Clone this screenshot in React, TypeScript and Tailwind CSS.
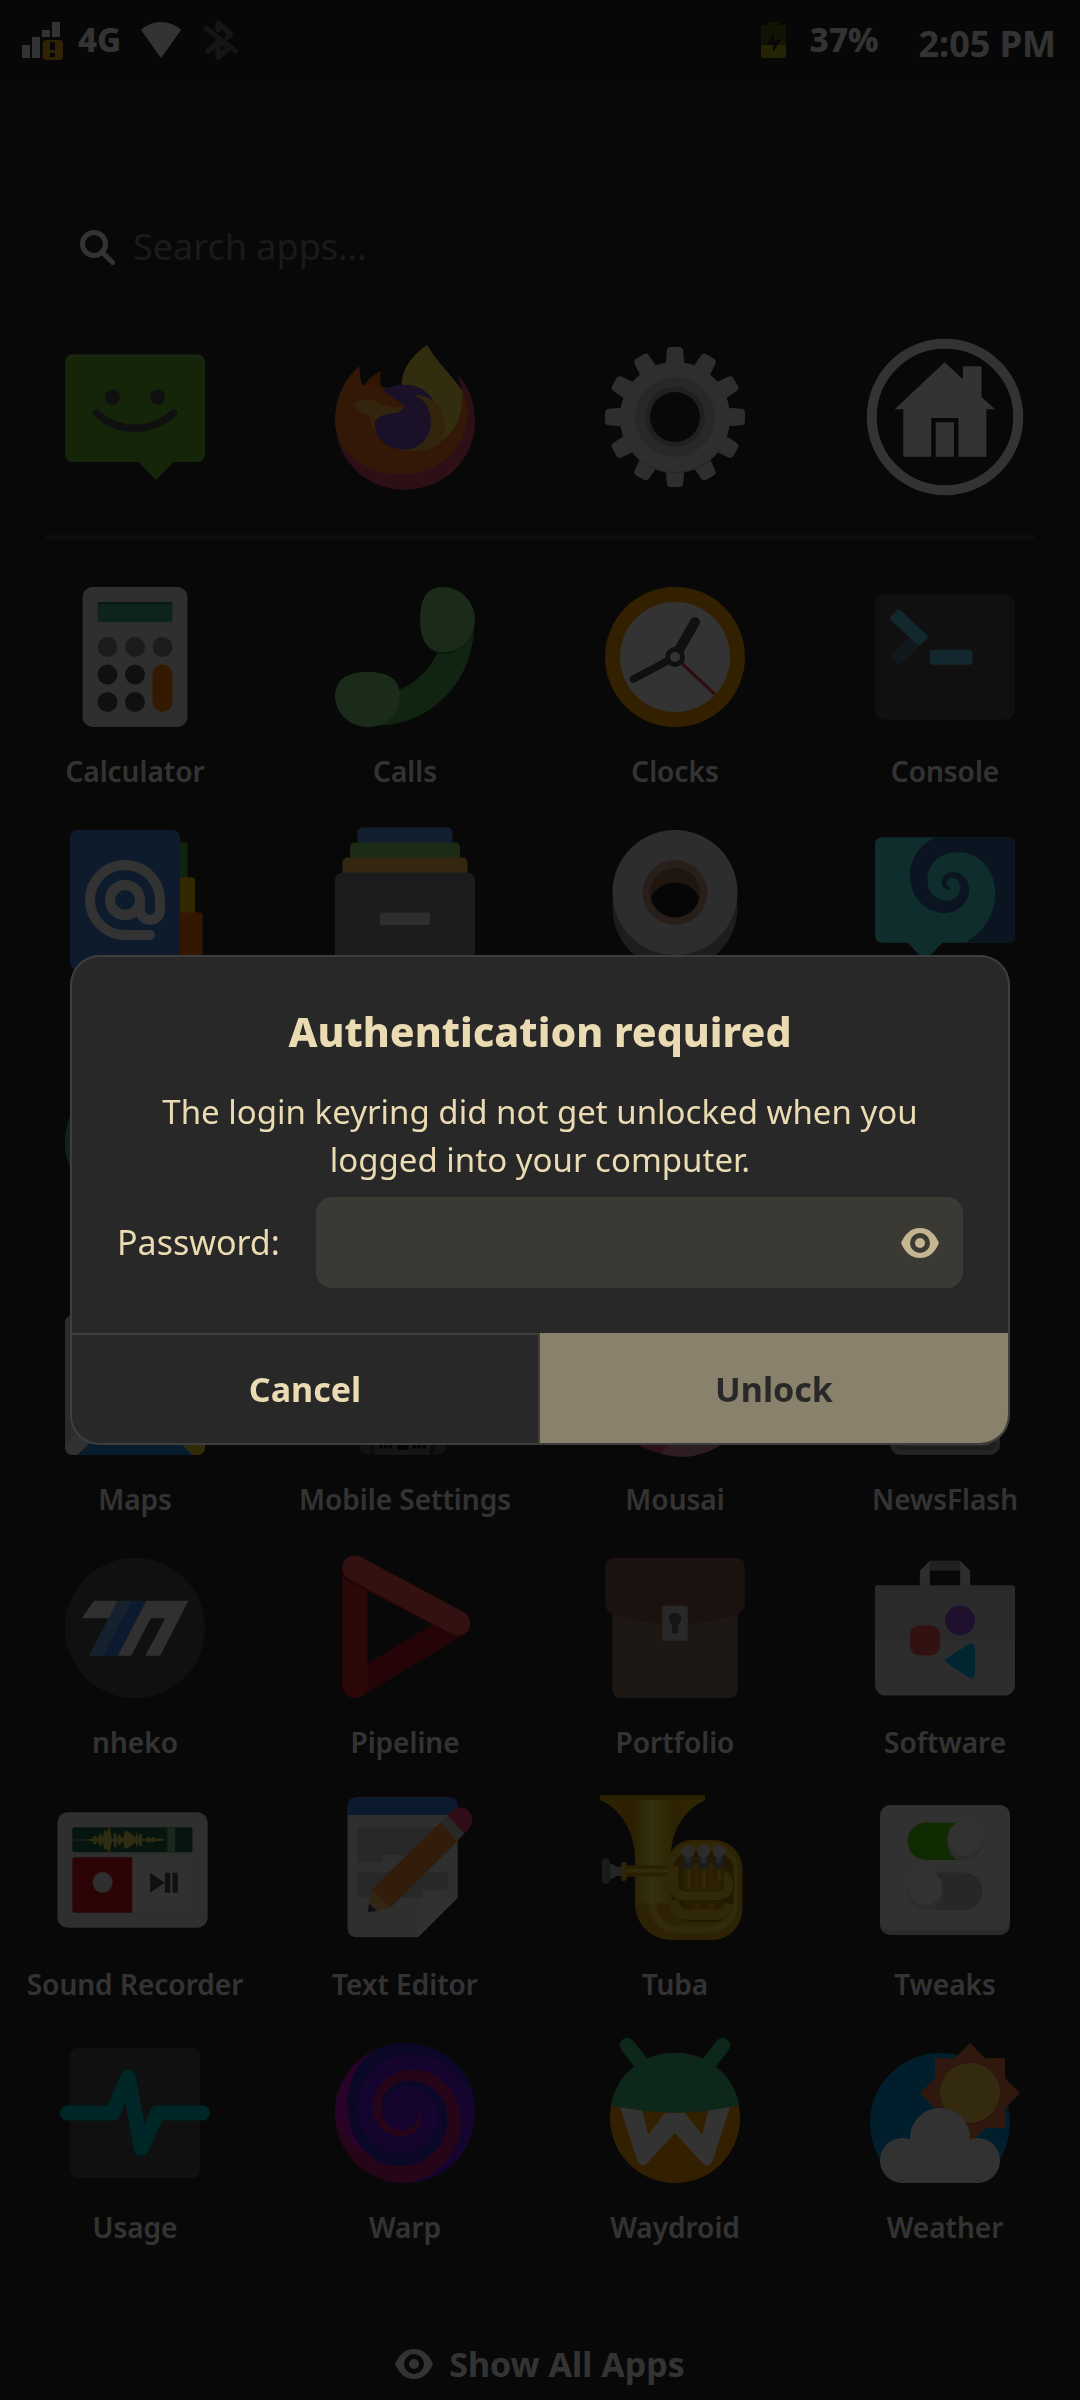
import type { ReactNode } from "react";

type Kids = { children?: ReactNode };

/** 64-unit icon canvas, 160px on screen. */
function Icon({ children }: Kids) {
  return (
    <svg viewBox="0 0 64 64" className="size-40 overflow-visible" aria-hidden="true">
      {children}
    </svg>
  );
}

/** Fine drawing grid centred on (x, y), mapped on the 64-unit canvas. */
function Fine({ x, y, children }: Kids & { x: number; y: number }) {
  return (
    <g transform={`translate(32 32) scale(0.13774 0.13333) translate(${-x} ${-y})`}>{children}</g>
  );
}

const Chats = () => (
  <Icon>
    <path d="M7 7H57a3 3 0 0 1 3 3V47a3 3 0 0 1-3 3H47.3L40.4 57.2 33.5 50H7a3 3 0 0 1-3-3V10a3 3 0 0 1 3-3Z" fill="#66bb2d" />
    <path d="M4 11V10a3 3 0 0 1 3-3H57a3 3 0 0 1 3 3v1a3 3 0 0 0-3-3H7a3 3 0 0 0-3 3Z" fill="#fff" opacity=".2" />
    <circle cx="23" cy="24" r="3" fill="#4f4f4f" />
    <circle cx="41" cy="24" r="3" fill="#4f4f4f" />
    <path d="M16.6 30.4C25 38.5 39 38.5 47.4 30.4" fill="none" stroke="#4f4f4f" strokeWidth="3" strokeLinecap="round" />
  </Icon>
);

const Firefox = () => (
  <Icon>
    <Fine x={1176} y={322}>
      <path d="M1325 190C1360 225 1379 280 1379 335C1379 450 1290 540 1176 540C1062 540 973 450 973 330L1340 240C1338 222 1332 205 1325 190Z" fill="#e0506a" />
      <path d="M1044 170C1000 205 973 270 973 330C976 425 1060 494 1166 494C1275 494 1358 410 1358 310C1358 285 1352 262 1342 245L1290 250L1176 240L1053 226C1046 215 1044 190 1044 170Z" fill="#ff7a2a" />
      <path d="M1106 185C1085 195 1068 210 1058 226L1110 245C1104 225 1102 205 1106 185Z" fill="#f96f0a" />
      <path d="M1240 105C1200 135 1165 175 1167 230L1230 300L1272 400C1320 375 1344 320 1343 245C1320 205 1270 160 1240 105Z" fill="#ffe04d" />
      <path d="M1203 257C1260 255 1292 300 1292 345C1292 370 1288 385 1280 398C1255 425 1200 430 1160 420L1200 330Z" fill="#ffb340" />
      <path d="M1028 282C1045 265 1075 265 1100 278C1125 292 1155 300 1176 288L1180 400L1205 414C1160 428 1080 400 1073 315C1050 312 1035 300 1028 282Z" fill="#ffb340" />
      <path d="M1110 245C1130 230 1150 225 1176 225C1215 225 1245 245 1262 278C1245 262 1225 256 1203 257C1235 270 1251 300 1251 335C1251 385 1220 420 1176 420C1125 420 1088 385 1088 345C1088 320 1120 310 1156 310L1176 288Z" fill="#8250c8" />
      <path d="M1053 226C1100 222 1140 270 1176 286C1155 300 1125 292 1100 278C1075 265 1045 265 1028 282L1020 240Z" fill="#ff7a2a" />
    </Fine>
  </Icon>
);

const Gear = () => (
  <Icon>
    {[0, 30, 60, 90, 120, 150, 180, 210, 240, 270, 300, 330].map((a) => (
      <path key={a} transform={`rotate(${a} 32 32)`} d="M28.2 12L28.7 5.6Q28.8 4 30.3 4H33.7Q35.2 4 35.3 5.6L35.8 12Z" fill="#e4e4e4" />
    ))}
    <circle cx="32" cy="32.5" r="22" fill="#b8b8b8" />
    <circle cx="32" cy="32" r="22" fill="#e4e4e4" />
    <circle cx="32" cy="32" r="16" fill="#c8c8c8" />
    <circle cx="32" cy="32" r="12" fill="#a2a2a2" />
    <circle cx="32" cy="32" r="10" fill="#282828" />
  </Icon>
);

const Home = () => (
  <Icon>
    <circle cx="32" cy="32" r="29.3" fill="none" stroke="#fff" strokeWidth="4" />
    <Fine x={1176} y={322}>
      <path d="M1175 158L1228 209V170H1282V262L1321 299H1296V441H1215V325H1136V441H1055V299H1030ZM1149 338H1202V441H1149Z" fill="#fff" />
    </Fine>
  </Icon>
);

const Calculator = () => (
  <Icon>
    <rect x="11" y="4" width="42" height="56" rx="4" fill="#e8e8e8" />
    <rect x="17" y="10" width="30" height="8" rx="1" fill="#46af87" />
    <path d="M17 11a1 1 0 0 1 1-1H46a1 1 0 0 1 1 1Z" fill="#2b7a5d" />
    {[21, 32, 43].map((x) => <circle key={x} cx={x} cy="28" r="4" fill="#8c8c8c" />)}
    {[21, 32].map((x) => <circle key={x} cx={x} cy="39" r="4" fill="#4f4f4f" />)}
    {[21, 32].map((x) => <circle key={x} cx={x} cy="50" r="4" fill="#4f4f4f" />)}
    <rect x="39" y="35" width="8" height="19" rx="4" fill="#ff7f00" />
  </Icon>
);

const Calls = () => (
  <Icon>
    <Fine x={1176} y={1042}>
      <path d="M1377 950C1372 1120 1250 1245 1100 1248L1160 1140C1210 1120 1250 1075 1275 1020Z" fill="#50b455" />
      <path d="M1285 837C1340 837 1379 885 1377 950C1370 995 1340 1033 1290 1033C1250 1033 1228 1000 1222 950Z" fill="#3b8a40" />
      <path d="M1285 832C1340 832 1379 880 1379 928C1379 985 1340 1027 1290 1027C1235 1027 1220 985 1220 928C1220 875 1235 832 1285 832Z" fill="#86d684" />
      <path d="M1067 1087C1125 1087 1161 1105 1161 1158C1161 1212 1120 1252 1067 1252C1015 1252 973 1210 973 1160C973 1108 1010 1087 1067 1087Z" fill="#86d684" />
    </Fine>
  </Icon>
);

const Clocks = () => (
  <Icon>
    <circle cx="32" cy="32" r="28" fill="#ffa000" />
    <circle cx="32" cy="32" r="22" fill="#fff" />
    <g fill="none" strokeLinecap="round">
      <path d="M32 32L48 47" stroke="#e8404a" strokeWidth="1.3" strokeLinecap="butt" />
      <path d="M32 32L15.4 40.8" stroke="#4f4f4f" strokeWidth="3" />
      <path d="M32 32L40 18" stroke="#4f4f4f" strokeWidth="4" />
    </g>
    <circle cx="32" cy="32" r="4" fill="#4f4f4f" />
    <circle cx="32" cy="32" r="2" fill="#fff" />
  </Icon>
);

const Console = () => (
  <Icon>
    <rect x="4" y="7" width="56" height="50" rx="4" fill="#505050" />
    <Fine x={1176} y={1042}>
      <g strokeWidth="12" strokeLinejoin="round">
        <path d="M1070 993L1022 1040L1042 1060L1092 1010Z" fill="#557d8c" stroke="#557d8c" />
        <path d="M1022 925L1042 905L1120 982L1100 1002Z" fill="#5fc3eb" stroke="#5fc3eb" />
      </g>
      <rect x="1132" y="1020" width="124" height="45" rx="9" fill="#5fc3eb" />
    </Fine>
  </Icon>
);

const Contacts = () => (
  <Icon>
    <rect x="40" y="9" width="13" height="20" rx="1" fill="#50b44f" />
    <rect x="40" y="23" width="16" height="20" rx="1" fill="#ffcc00" />
    <rect x="40" y="37" width="19" height="17" rx="1" fill="#ff7300" />
    <rect x="6" y="4" width="44" height="56" rx="3" fill="#4689dc" />
    <g fill="none" stroke="#fff" strokeWidth="4" strokeLinecap="round">
      <circle cx="28" cy="32" r="6" />
      <path d="M34 32V36A4 4 0 0 0 42 36V32A14 14 0 1 0 28 46H38" />
    </g>
  </Icon>
);

const Files = () => (
  <Icon>
    <rect x="13" y="3" width="38" height="20" rx="2" fill="#5a9be6" />
    <rect x="10" y="9" width="44" height="20" rx="2" fill="#86d668" />
    <rect x="7" y="15" width="50" height="20" rx="2" fill="#ffc355" />
    <rect x="4" y="21" width="56" height="39" rx="3" fill="#8e8e8e" />
    <rect x="22" y="37" width="20" height="5" rx="1" fill="#e4e4e4" />
  </Icon>
);

const DiskUsage = () => (
  <Icon>
    <clipPath id="roll-hole"><circle cx="32" cy="29" r="10" /></clipPath>
    <circle cx="32" cy="35" r="25" fill="#919191" />
    <circle cx="32" cy="29" r="25" fill="#e0e0e0" />
    <circle cx="32" cy="29" r="13" fill="#cd9b82" />
    <circle cx="32" cy="29" r="10" fill="#9b6e4b" />
    <circle cx="32" cy="36" r="11" fill="#1e1e1e" clipPath="url(#roll-hole)" />
  </Icon>
);

const Fractal = () => (
  <Icon>
    <Fine x={1176} y={300}>
      <path d="M993 112H1360Q1379 112 1379 132V408Q1379 428 1360 428H1168L1118 484L1068 428H993Q973 428 973 408V132Q973 112 993 112Z" fill="#4ae0dc" />
      <path d="M1148 112H1360Q1379 112 1379 132V408Q1379 428 1360 428H1235C1290 395 1322 340 1322 280C1322 210 1275 157 1212 157C1160 157 1125 195 1125 238C1125 275 1150 302 1180 302C1205 302 1220 285 1220 264C1220 245 1208 233 1195 233C1187 233 1181 240 1181 248C1181 256 1186 261 1193 261L1190 270C1178 271 1166 262 1166 247C1166 230 1180 216 1200 216C1225 216 1246 237 1246 268C1246 305 1218 339 1175 339C1118 339 1074 290 1074 225C1074 180 1100 135 1148 112Z" fill="#3769a5" />
    </Fine>
  </Icon>
);

const Disc = () => (
  <Icon>
    <circle cx="32" cy="32" r="28" fill="#40b589" />
  </Icon>
);

const Maps = () => (
  <Icon>
    <clipPath id="map-sheet"><rect x="4" y="4" width="56" height="56" rx="3" /></clipPath>
    <g clipPath="url(#map-sheet)">
      <rect x="4" y="4" width="56" height="56" fill="#d8d4cc" />
      <path d="M4 56L20 40V60H4Z" fill="#f2f2f2" />
      <path d="M9 60L24 45L40 45L55 60Z" fill="#1f8ce0" />
      <path d="M40 45H60V60H55Z" fill="#f5dc28" />
    </g>
  </Icon>
);

const Phone = () => (
  <Icon>
    <rect x="13.4" y="4" width="35.2" height="56" rx="4" fill="#53565a" />
    <path d="M18 30H20V60H18ZM42 30H44V60H42Z" fill="#34384a" />
    <path d="M20 30H42V60H20Z" fill="#6a6b6e" />
    <path d="M28.7 55H33.4V57Q33.4 58 32.4 58H29.7Q28.7 58 28.7 57Z" fill="#101010" />
    {[22.4, 24.3, 26.2, 35.8, 37.7, 39.7].map((x) => <circle key={x} cx={x} cy="56.7" r=".8" fill="#101010" />)}
  </Icon>
);

const Mousai = () => (
  <Icon>
    <circle cx="32" cy="32" r="28" fill="#e6487a" />
    <path d="M26 59.4L33 52H55A28 28 0 0 1 26 59.4Z" fill="#e08aa2" />
  </Icon>
);

const NewsFlash = () => (
  <Icon>
    <rect x="10.2" y="4" width="43.8" height="56" rx="4" fill="#b4b6ae" />
    <rect x="12" y="6" width="40.5" height="52" rx="3" fill="#8e8f8a" />
    <rect x="13.4" y="6" width="37.8" height="50.4" rx="3" fill="#c8c8c6" />
  </Icon>
);

const Nheko = () => (
  <Icon>
    <circle cx="32" cy="32" r="28" fill="#525354" />
    <Fine x={392} y={1012}>
      <path d="M273 930H342L316 983H238Z" fill="#eee" />
      <path d="M342 930H383L300 1095H258Z" fill="#69aae6" />
      <path d="M383 930H425L342 1095H300Z" fill="#4188f0" />
      <path d="M425 930H547L465 1095H422L480 983H438L381 1095H342Z" fill="#eee" />
    </Fine>
  </Icon>
);

const Pipeline = () => (
  <Icon>
    <g fill="none" strokeWidth="10" strokeLinecap="round">
      <path d="M12 55L53 30.5" stroke="#b41820" />
      <path d="M12 8V55" stroke="#d8242c" />
      <path d="M12 9L53 30.5" stroke="#a01820" />
      <path d="M12 8L53 30" stroke="#f7564f" />
    </g>
  </Icon>
);

const Portfolio = () => (
  <Icon>
    <rect x="7" y="20" width="50" height="40" rx="3" fill="#947763" />
    <Fine x={392} y={1012}>
      <path d="M189 831Q189 801 218 801H566Q595 801 595 831V935C595 955 585 967 570 972C460 1010 325 1010 214 972C198 967 189 955 189 935Z" fill="#85564a" />
      <rect x="355" y="945" width="74" height="105" rx="6" fill="#c5c8cc" />
      <ellipse cx="392" cy="985" rx="18" ry="19" fill="#6a6a6a" />
      <rect x="383" y="990" width="18" height="38" fill="#6a6a6a" />
    </Fine>
  </Icon>
);

const Software = () => (
  <Icon>
    <path d="M4 16a1 1 0 0 1 1-1H59a1 1 0 0 1 1 1V55a4 4 0 0 1-4 4H8a4 4 0 0 1-4-4Z" fill="#e2e2e2" />
    <path d="M4 16a1 1 0 0 1 1-1H59a1 1 0 0 1 1 1V37H4Z" fill="#d0d0d0" />
    <Fine x={1176} y={1012}>
      <path d="M1132 810H1220V840H1132Z" fill="#a0a0a0" />
      <path d="M1103 885V840L1132 810V885ZM1249 885V840L1220 810V885Z" fill="#e2e2e2" />
      <path d="M1182 1110L1250 1065Q1256 1062 1256 1070V1150Q1256 1158 1250 1156Z" fill="#06b8f5" stroke="#06b8f5" strokeWidth="13" strokeLinejoin="round" />
    </Fine>
    <circle cx="38" cy="29" r="6" fill="#9a50e6" />
    <rect x="18" y="31" width="12" height="12" rx="3.6" fill="#f85555" />
  </Icon>
);

const Recorder = () => (
  <Icon>
    <Fine x={392} y={300}>
      <rect x="167" y="127" width="436" height="346" rx="30" fill="#e9e9e9" />
      <rect x="210" y="172" width="349" height="75" rx="8" fill="#246a4b" />
      <path d="M486 172H508V247H486Z" fill="#7fc890" />
      <path
        d="M212 209H242L268 206L272 198H279L284 207L288 193H295L299 205L302 184Q306 176 311 186L315 172H319L323 200L329 210L331 190H337L341 208L344 194H349L353 203H358L362 184Q370 180 378 190L394 202L397 184L401 204L405 192H411L413 206L424 208L432 199L437 206L448 200L452 207L464 205L480 210L464 214L452 212L448 218L437 213L432 220L424 212L413 214L411 228H405L401 216L397 234L394 217L378 228Q370 238 362 236L358 216H353L349 226H344L341 212L337 232H331L329 211L323 222L319 248H315L311 236Q306 242 302 236L299 214L295 226H288L284 212L279 222H272L268 213L242 211H212Z"
        fill="#e6d95a"
      />
      <path d="M218 262H385V428H218Q210 428 210 420V270Q210 262 218 262Z" fill="#dc1820" />
      <path d="M385 262H551Q559 262 559 270V424Q559 432 551 432H385Z" fill="#d4d4d4" />
      <path d="M385 262H551Q559 262 559 270V420Q559 428 551 428H385Z" fill="#f2f2f2" />
      <ellipse cx="298" cy="337" rx="29" ry="31" fill="#e6e6e6" />
      <path d="M436 308L478 338L436 368ZM479 308H494V368H479ZM501 308H516V368H501Z" fill="#4f4f4f" />
    </Fine>
  </Icon>
);

const TextEditor = () => (
  <Icon>
    <Fine x={1176} y={300}>
      <path d="M1009 115Q1009 82 1040 82H1298Q1329 82 1329 115V383L1214 502H1040Q1009 502 1009 470Z" fill="#e8e8e8" />
      <path d="M1009 135V115Q1009 82 1040 82H1298Q1329 82 1329 115V135Z" fill="#3782e6" />
      <path d="M1038 172H1300V255H1110V277H1038ZM1038 307H1300V360H1226V383H1038Z" fill="#c6c6c6" />
      <path d="M1214 502V405Q1214 383 1235 383H1329Z" fill="#f6f6f6" />
      <path d="M1279 157L1329 212L1132 415L1078 360Z" fill="#f98f34" />
      <path d="M1279 157L1299 137L1349 190L1329 212Z" fill="#c9cac4" />
      <path d="M1299 137C1315 112 1345 105 1360 122C1380 142 1372 170 1349 190Z" fill="#f04578" />
      <path d="M1078 360L1132 415L1095 423L1071 400Z" fill="#f2c26b" />
      <path d="M1071 400L1095 423L1068 427Z" fill="#50455a" />
    </Fine>
  </Icon>
);

const Tuba = () => (
  <Icon>
    <defs>
      <linearGradient id="bell" x1="0" x2="1">
        <stop offset="0" stopColor="#e0a800" />
        <stop offset=".3" stopColor="#d8a000" />
        <stop offset=".5" stopColor="#fff04a" />
        <stop offset=".72" stopColor="#e2ae08" />
        <stop offset="1" stopColor="#f0c420" />
      </linearGradient>
    </defs>
    <Fine x={392} y={300}>
      <path d="M276 380V400C276 465 325 510 385 510H495C550 510 588 470 588 410V300C588 245 550 210 500 210H440C400 210 369 245 369 290V380Z" fill="#e2ac10" />
      <g fill="none">
        <path d="M326 380V400C326 440 352 478 395 478H480C530 478 562 450 562 405V300C562 258 535 230 500 230H440C410 230 388 255 388 290V350" stroke="#f0cc30" strokeWidth="24" />
        <path d="M328 260V400C328 440 352 480 395 480H480C530 480 568 450 568 405V300" stroke="#fbe650" strokeWidth="12" opacity=".6" />
        <rect x="402" y="262" width="142" height="176" rx="40" stroke="#b07c00" strokeWidth="36" />
        <path d="M390 390V400Q392 432 430 434H510Q545 434 548 400" stroke="#ecc62c" strokeWidth="30" />
        <path d="M388 290V340Q388 378 425 378H505Q548 378 548 345Q548 312 512 312" stroke="#b98600" strokeWidth="36" />
        <path d="M388 290V340Q388 378 425 378H505Q548 378 548 345Q548 312 512 312" stroke="#eec830" strokeWidth="27" />
      </g>
      <path d="M415 290H448V360H415ZM459 290H491V360H459ZM503 290H536V325H503Z" fill="#d89c08" />
      <path d="M428 296H437V360H428ZM472 296H481V360H472ZM515 296H524V330H515Z" fill="#f0cc30" />
      <path d="M420 398H448Q446 418 434 418T420 398ZM462 398H492Q490 418 476 418T462 398ZM506 398H536Q534 418 520 418T506 398Z" fill="#c48a00" />
      <path d="M174 75H479V90C410 125 380 190 380 265V400H276V265C276 190 235 115 174 90Z" fill="url(#bell)" />
      <path d="M174 75H479V90H174Z" fill="#dca010" />
      <rect x="245" y="286" width="123" height="34" fill="#d89c08" />
      <rect x="245" y="296" width="123" height="12" fill="#f2d23a" />
      <rect x="236" y="275" width="15" height="58" rx="7" fill="#eab818" />
      <path d="M203 282Q216 282 220 290L236 290V318L220 318Q216 326 203 326Z" fill="#b4b4b4" />
      <rect x="180" y="265" width="23" height="76" rx="11" fill="#858585" />
      {[431, 475, 519].map((x) => (
        <g key={x}>
          <rect x={x - 17} y="258" width="34" height="40" rx="14" fill="#8c8c8c" />
          <rect x={x - 8} y="258" width="15" height="22" fill="#b8b8b8" />
          <ellipse cx={x} cy="244" rx="18" ry="19" fill="#dcdcdc" />
        </g>
      ))}
    </Fine>
  </Icon>
);

const Tweaks = () => (
  <Icon>
    <rect x="6" y="8" width="52" height="50" rx="4" fill="#d6d6d4" />
    <rect x="6" y="6" width="52" height="50" rx="4" fill="#f2f2f2" />
    <rect x="17" y="13" width="30" height="15" rx="7.5" fill="#4fd20a" />
    <path d="M33 20.5H47A7 7.5 0 0 1 40 28H37A7 7.5 0 0 1 33 20.5Z" fill="#dcdcdc" />
    <circle cx="40" cy="19.3" r="7" fill="#f8f8f8" />
    <rect x="17" y="33" width="30" height="15" rx="7.5" fill="#c0c0c0" />
    <path d="M17 40H31A7 8 0 0 1 27 48H24.5A7.5 7.5 0 0 1 17 40Z" fill="#dcdcdc" />
    <circle cx="24" cy="39" r="7" fill="#f8f8f8" />
  </Icon>
);

const Usage = () => (
  <Icon>
    <rect x="6" y="6" width="52" height="52" rx="3" fill="#515151" />
    <path d="M5 32H23L29.2 17.6L34.6 46L41 32H59" fill="none" stroke="#00c0c4" strokeWidth="6" strokeLinecap="round" strokeLinejoin="round" />
  </Icon>
);

const Warp = () => (
  <Icon>
    <circle cx="32" cy="32" r="28" fill="#6a18e6" />
    <Fine x={1176} y={1028}>
      <path d="M1115 828C1030 855 973 935 973 1028C973 1060 980 1085 990 1110C1030 1165 1080 1200 1150 1195L1160 1186C1080 1186 1009 1110 1009 1000C1009 930 1050 850 1115 828Z" fill="#c80ac8" />
      <path d="M973 1035C975 1150 1065 1238 1176 1238C1275 1225 1338 1140 1338 1055C1338 960 1270 898 1200 898C1130 898 1083 950 1083 1010C1083 1060 1120 1098 1165 1098C1200 1098 1225 1070 1225 1038C1225 1030 1222 1022 1219 1018C1222 1055 1195 1080 1165 1080C1130 1080 1106 1050 1106 1005C1110 965 1145 931 1190 931C1255 931 1299 985 1299 1050C1299 1130 1235 1187 1160 1187C1090 1190 1010 1130 973 1035Z" fill="#c41978" />
      <path d="M1115 828C1135 820 1155 818 1176 818C1290 818 1379 910 1379 1000C1360 920 1290 852 1196 852C1105 852 1038 925 1038 1008C1038 1090 1095 1146 1163 1146C1225 1146 1271 1095 1271 1040C1271 980 1225 946 1187 948C1150 948 1114 975 1114 1025C1108 1020 1106 1010 1106 1005C1110 965 1145 931 1190 931C1255 931 1299 985 1299 1050C1299 1130 1235 1187 1160 1187C1075 1187 1009 1110 1009 1000C1009 920 1050 850 1115 828Z" fill="#3723c0" />
    </Fine>
  </Icon>
);

const Waydroid = () => (
  <Icon>
    <path d="M12.9 5L20 14M51.1 5L44 14" stroke="#40c283" strokeWidth="6" strokeLinecap="round" />
    <circle cx="32" cy="34" r="26" fill="#ffa000" />
    <Fine x={392} y={1028}>
      <path d="M232 1010L297 1020L314 1093L364 1027H420L471 1093L489 1020L552 1010L500 1175Q490 1192 475 1182L392 1088L308 1182Q293 1190 284 1175Z" fill="#fff" />
      <path d="M206 1005C222 910 300 847 392 847S562 910 578 1005Q392 1048 206 1005Z" fill="#40c283" />
    </Fine>
  </Icon>
);

const Weather = () => (
  <Icon>
    <clipPath id="sky"><rect width="64" height="50.5" /></clipPath>
    <circle cx="30" cy="36" r="28" fill="#0596e0" clipPath="url(#sky)" />
    <path d="M28 10H56V38H28Z" fill="#f5794a" />
    <path d="M42 4L62 24L42 44L22 24Z" fill="#f5794a" />
    <circle cx="42" cy="24.6" r="12" fill="#c45f38" />
    <circle cx="42" cy="24" r="12" fill="#fcd24a" />
    <g fill="#fbfbfb">
      <circle cx="15" cy="51" r="9" />
      <circle cx="30" cy="42" r="12" />
      <circle cx="45" cy="51" r="9" />
      <rect x="15" y="44" width="30" height="16" />
    </g>
  </Icon>
);

function Eye({ className, pupil }: { className: string; pupil: string }) {
  return (
    <svg viewBox="0 0 38 30" className={className} aria-hidden="true">
      <path d="M19 0C28 0 34 6 38 15C34 24 28 30 19 30S4 24 0 15C4 6 10 0 19 0Z" fill="currentColor" />
      <circle cx="19" cy="15" r="10" fill={pupil} />
      <circle cx="19" cy="15" r="5" fill="currentColor" />
    </svg>
  );
}

const favorites = [
  { name: "Chats", icon: <Chats /> },
  { name: "Firefox", icon: <Firefox /> },
  { name: "Settings", icon: <Gear /> },
  { name: "Home", icon: <Home /> },
];

const apps: { label: string; icon: ReactNode }[] = [
  { label: "Calculator", icon: <Calculator /> },
  { label: "Calls", icon: <Calls /> },
  { label: "Clocks", icon: <Clocks /> },
  { label: "Console", icon: <Console /> },
  { label: "", icon: <Contacts /> },
  { label: "", icon: <Files /> },
  { label: "", icon: <DiskUsage /> },
  { label: "", icon: <Fractal /> },
  { label: "", icon: <Disc /> },
  { label: "", icon: null },
  { label: "", icon: null },
  { label: "", icon: null },
  { label: "Maps", icon: <Maps /> },
  { label: "Mobile Settings", icon: <Phone /> },
  { label: "Mousai", icon: <Mousai /> },
  { label: "NewsFlash", icon: <NewsFlash /> },
  { label: "nheko", icon: <Nheko /> },
  { label: "Pipeline", icon: <Pipeline /> },
  { label: "Portfolio", icon: <Portfolio /> },
  { label: "Software", icon: <Software /> },
  { label: "Sound Recorder", icon: <Recorder /> },
  { label: "Text Editor", icon: <TextEditor /> },
  { label: "Tuba", icon: <Tuba /> },
  { label: "Tweaks", icon: <Tweaks /> },
  { label: "Usage", icon: <Usage /> },
  { label: "Warp", icon: <Warp /> },
  { label: "Waydroid", icon: <Waydroid /> },
  { label: "Weather", icon: <Weather /> },
];

function StatusBar() {
  return (
    <header className="flex h-20 items-center justify-between border-b border-[#141414] bg-[#262626] pr-6 pl-[22px] font-extrabold">
      <div className="flex items-center">
        <svg viewBox="0 0 42 40" className="h-10 w-[42px]" aria-hidden="true">
          <path d="M0 25H8V38H0ZM10 17H18V38H10ZM20 10H28V17H20ZM30 2H38V17H30Z" fill="#fff" />
          <rect x="20.5" y="20" width="20.5" height="20" rx="4" fill="#f0a818" />
          <path d="M28 22H33V30H28ZM28 33H33V37H28Z" fill="#262626" />
        </svg>
        <span className="ml-3.5 text-[33px]">4G</span>
        <svg viewBox="0 0 40 36" className="ml-5 h-9 w-10" aria-hidden="true">
          <path d="M0 8Q9 0 20 0T40 8L20 36Z" fill="#fff" />
        </svg>
        <svg viewBox="0 0 36 40" className="ml-[22px] h-10 w-9" fill="none" stroke="#6a6a66" strokeWidth="5" aria-hidden="true">
          <path d="M1.5 7L34 32.5" />
          <path d="M15 10V3L27.5 14L24 17.5M5 31L15 22.5V37.5L26 28L15 20" strokeLinecap="round" strokeLinejoin="round" />
        </svg>
      </div>
      <div className="flex items-center">
        <svg viewBox="0 0 25 36" className="h-9 w-[25px]" aria-hidden="true">
          <path d="M8 0H18V3H24Q25 3 25 4V23H0V4Q0 3 1 3H8Z" fill="#626216" />
          <path d="M0 23H25V34Q25 36 23 36H2Q0 36 0 34Z" fill="#b2b41c" />
          <path d="M13 11L5 23H12V30L20 18H13Z" fill="#262626" />
        </svg>
        <span className="ml-6 text-[33px]">37%</span>
        <span className="ml-10 pt-2 text-4xl leading-[48px] font-bold">2:05 PM</span>
      </div>
    </header>
  );
}

export default function App() {
  return (
    <div className="flex min-h-screen flex-col bg-[#282828] font-['Noto_Sans',sans-serif] text-white">
      <StatusBar />
      <main className="flex flex-1 flex-col">
        <div className="mt-[137px] flex h-[60px] items-center gap-[18px] px-20">
          <svg viewBox="0 0 35 35" className="size-[35px]" fill="none" stroke="#fff" strokeWidth="5" strokeLinecap="round" aria-hidden="true">
            <circle cx="14" cy="14" r="11.5" />
            <path d="M22.5 22.5L32.5 32.5" />
          </svg>
          <input type="text" aria-label="Search apps" placeholder="Search apps…" className="min-w-0 flex-1 bg-transparent text-4xl leading-[60px] outline-none placeholder:text-[#808080]" />
        </div>
        <nav className="mt-[60px] grid grid-cols-4">
          {favorites.map((f) => (
            <button key={f.name} type="button" aria-label={f.name} className="flex justify-center">{f.icon}</button>
          ))}
        </nav>
        <hr className="mx-[45px] mt-[38px] h-[5px] rounded-full border-0 bg-[#404040]" />
        <section className="mt-[37px] grid flex-1 grid-cols-4 content-between">
          {apps.map((a, i) => (
            <button key={i} type="button" className="flex h-[212px] flex-col items-center gap-4">
              {a.icon}
              {a.label && <span className="text-[28px] leading-9 font-semibold whitespace-nowrap">{a.label}</span>}
            </button>
          ))}
        </section>
        <footer className="mt-[95px] flex justify-center pb-3">
          <button type="button" className="flex items-center gap-4 text-[34px] leading-[48px] font-bold">
            <Eye className="h-[30px] w-[38px]" pupil="#282828" />
            Show All Apps
          </button>
        </footer>
      </main>

      <div className="fixed inset-0 flex items-center justify-center bg-black/80 px-[70px]">
        <form role="dialog" aria-labelledby="auth-title" className="flex w-full flex-col overflow-hidden rounded-[30px] border-2 border-[#3e3e3e] bg-[#282828] text-[34px] text-[#ebdbb2]">
          <div className="flex flex-col px-[45px] pt-12 pb-[45px]">
            <h1 id="auth-title" className="text-center text-[41px] leading-[52px] font-extrabold">Authentication required</h1>
            <p className="mt-[31px] px-8 text-center text-[33px] leading-[48px]">The login keyring did not get unlocked when you logged into your computer.</p>
            <div className="mt-[13px] flex items-center gap-9">
              <label htmlFor="password">Password:</label>
              <div className="flex h-[91px] min-w-0 flex-1 items-center rounded-2xl bg-[#3b3934] px-6">
                <input id="password" type="password" className="min-w-0 flex-1 bg-transparent outline-none" />
                <button type="button" aria-label="Show password" className="text-[#c4b692]">
                  <Eye className="h-[30px] w-[38px]" pupil="#3b3934" />
                </button>
              </div>
            </div>
          </div>
          <div className="grid h-[110px] grid-cols-2 font-bold">
            <button type="button" className="border-t-2 border-r-2 border-[#3e3e3e]">Cancel</button>
            <button type="submit" className="border-t-2 border-[#8a816d] bg-[#8a816d] text-[#282828]">Unlock</button>
          </div>
        </form>
      </div>
    </div>
  );
}
